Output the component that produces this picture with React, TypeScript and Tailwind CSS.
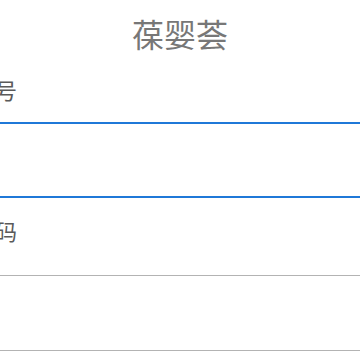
import React from 'react';

export default function App() {
  return (
    <div
      className="w-[360px] h-[360px] overflow-hidden bg-white"
      style={{ fontFamily: '"Noto Sans CJK SC", "Noto Sans", sans-serif' }}
    >
      {/* Title */}
      <h1 className="pt-[11px] text-center text-[32px] leading-[44px] font-normal text-[#777777]">
        葆婴荟
      </h1>

      {/* Account */}
      <label className="mt-[20px] -ml-[27px] block text-[22px] leading-[28px] text-[#5a5a5a]">
        账号
      </label>
      <input
        type="text"
        className="mt-[19px] -mx-[4px] block h-[76px] w-[368px] border-2 border-[#1f78d8] bg-white outline-none"
      />

      {/* Password */}
      <label className="mt-[18px] -ml-[27px] block text-[22px] leading-[28px] text-[#5a5a5a]">
        密码
      </label>
      <input
        type="password"
        className="mt-[31px] -mx-[4px] block h-[76px] w-[368px] border border-[#b3b3b3] bg-white outline-none"
      />
    </div>
  );
}
